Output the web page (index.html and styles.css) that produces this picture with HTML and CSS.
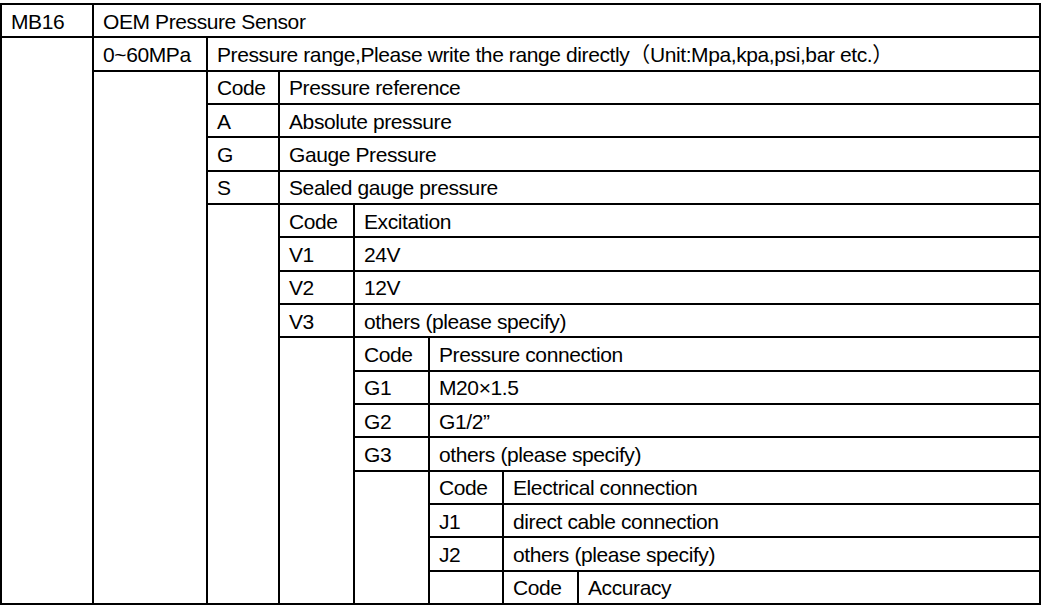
FILE: index.html
```html
<!DOCTYPE html>
<html>
<head>
<meta charset="utf-8">
<link rel="stylesheet" href="styles.css">
</head>
<body>
<table class="spec">
  <colgroup>
    <col class="c1"><col class="c2"><col class="c3"><col class="c4"><col class="c5"><col class="c6"><col class="c7"><col class="c8">
  </colgroup>
  <tbody>
    <tr><td>MB16</td><td colspan="7">OEM Pressure Sensor</td></tr>
    <tr><td rowspan="17"></td><td>0~60MPa</td><td colspan="6">Pressure range,Please write the range directly（Unit:Mpa,kpa,psi,bar etc.）</td></tr>
    <tr><td rowspan="16"></td><td>Code</td><td colspan="5">Pressure reference</td></tr>
    <tr><td>A</td><td colspan="5">Absolute pressure</td></tr>
    <tr><td>G</td><td colspan="5">Gauge Pressure</td></tr>
    <tr><td>S</td><td colspan="5">Sealed gauge pressure</td></tr>
    <tr><td rowspan="12"></td><td>Code</td><td colspan="4">Excitation</td></tr>
    <tr><td>V1</td><td colspan="4">24V</td></tr>
    <tr><td>V2</td><td colspan="4">12V</td></tr>
    <tr><td>V3</td><td colspan="4">others (please specify)</td></tr>
    <tr><td rowspan="8"></td><td>Code</td><td colspan="3">Pressure connection</td></tr>
    <tr><td>G1</td><td colspan="3">M20×1.5</td></tr>
    <tr><td>G2</td><td colspan="3">G1/2”</td></tr>
    <tr><td>G3</td><td colspan="3">others (please specify)</td></tr>
    <tr><td rowspan="4"></td><td>Code</td><td colspan="2">Electrical connection</td></tr>
    <tr><td>J1</td><td colspan="2">direct cable connection</td></tr>
    <tr><td>J2</td><td colspan="2">others (please specify)</td></tr>
    <tr><td></td><td>Code</td><td>Accuracy</td></tr>
  </tbody>
</table>
</body>
</html>
```

FILE: styles.css
```css
html, body {
  margin: 0;
  padding: 0;
  background: #fff;
}
body {
  padding-top: 3px;
}
.spec {
  table-layout: fixed;
  width: 1041px;
  border-collapse: separate;
  border-spacing: 0;
  border-top: 2px solid #000;
  border-left: 2px solid #000;
  font-family: "Liberation Sans", Arial, "Noto Sans CJK SC", sans-serif;
  font-size: 21px;
  letter-spacing: -0.4px;
  color: #000;
}
.c1 { width: 92px; }
.c2 { width: 114px; }
.c3 { width: 72px; }
.c4 { width: 75px; }
.c5 { width: 75px; }
.c6 { width: 74px; }
.c7 { width: 75px; }
.c8 { width: 462px; }
.spec tr {
  height: 33.333px;
}
.spec td {
  border-right: 2px solid #000;
  border-bottom: 2px solid #000;
  padding: 2px 0 0 9px;
  vertical-align: middle;
  white-space: nowrap;
  overflow: hidden;
  line-height: 22px;
  box-sizing: border-box;
}
```
